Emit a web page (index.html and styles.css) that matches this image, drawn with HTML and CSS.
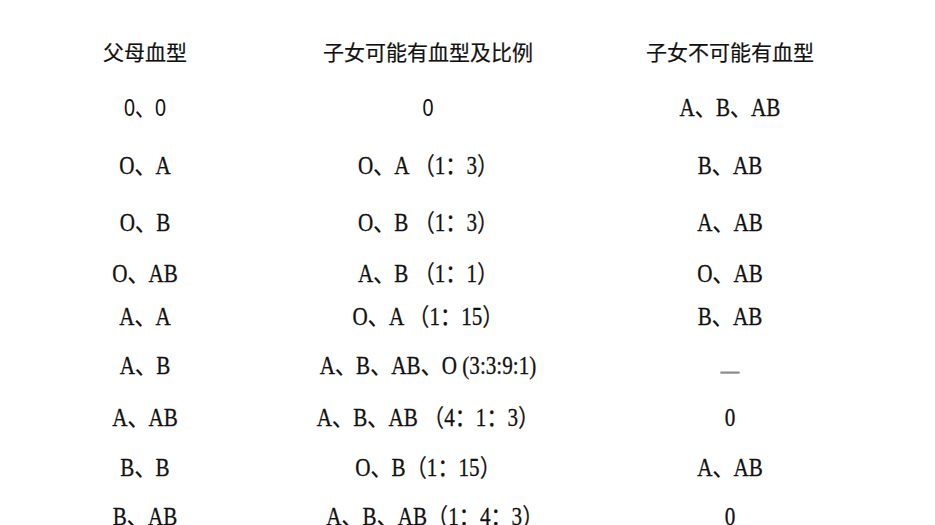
FILE: index.html
```html
<!DOCTYPE html>
<html lang="zh">
<head>
<meta charset="utf-8">
<title>父母血型与子女血型</title>
<link rel="stylesheet" href="styles.css">
</head>
<body>
<div class="table">
  <div class="cell head">父母血型</div>
  <div class="cell head">子女可能有血型及比例</div>
  <div class="cell head">子女不可能有血型</div>

  <div class="cell sans">0、0</div>
  <div class="cell sans">0</div>
  <div class="cell">A、B、AB</div>

  <div class="cell">O、A</div>
  <div class="cell">O、A （1：3）</div>
  <div class="cell">B、AB</div>

  <div class="cell">O、B</div>
  <div class="cell">O、B （1：3）</div>
  <div class="cell">A、AB</div>

  <div class="cell">O、AB</div>
  <div class="cell">A、B （1：1）</div>
  <div class="cell">O、AB</div>

  <div class="cell">A、A</div>
  <div class="cell">O、A （1：15）</div>
  <div class="cell">B、AB</div>

  <div class="cell">A、B</div>
  <div class="cell">A、B、AB、O (3:3:9:1)</div>
  <div class="cell"><span class="dash"></span></div>

  <div class="cell">A、AB</div>
  <div class="cell">A、B、AB （4：1：3）</div>
  <div class="cell">0</div>

  <div class="cell">B、B</div>
  <div class="cell">O、B（1：15）</div>
  <div class="cell">A、AB</div>

  <div class="cell">B、AB</div>
  <div class="cell shift">A、B、AB（1：4：3）</div>
  <div class="cell">0</div>
</div>
</body>
</html>
```
FILE: styles.css
```css
html, body {
  margin: 0;
  padding: 0;
  background: #ffffff;
}

body {
  width: 935px;
  height: 525px;
  overflow: hidden;
  color: #111111;
  font-family: "Liberation Serif", "Noto Sans CJK SC", serif;
}

.table {
  display: grid;
  grid-template-columns: 290px 276px 328px;
  grid-template-rows: 57px 58px 57px 51px 43px 49px 52px 50px 49px 40px;
  padding-top: 39px;
}

.cell {
  align-self: start;
  text-align: center;
  font-size: 22px;
  line-height: 24px;
  height: 24px;
  white-space: nowrap;
  transform: scale(0.96, 1.1);
  -webkit-text-stroke: 0.25px #111111;
}

.head {
  font-family: "Noto Sans CJK SC", sans-serif;
  font-size: 21px;
  transform: none;
  -webkit-text-stroke: 0.2px #111111;
}

.sans {
  font-family: "Liberation Sans", "Noto Sans CJK SC", sans-serif;
  font-size: 22px;
  transform: scale(0.9, 1.12);
  -webkit-text-stroke: 0;
}

.shift {
  padding-left: 14px;
}

.dash {
  display: inline-block;
  width: 20px;
  height: 2px;
  background: #8a8a8a;
  vertical-align: baseline;
  -webkit-text-stroke: 0;
}
```
